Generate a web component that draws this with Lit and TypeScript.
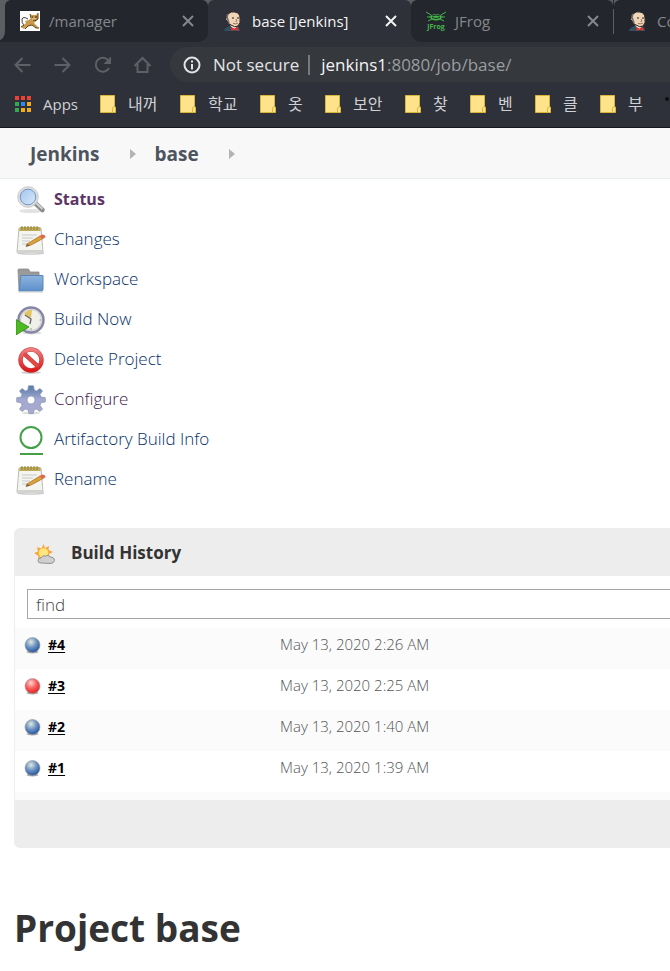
import { LitElement, html, svg, css } from "lit";
import { customElement } from "lit/decorators.js";
import { classMap } from "lit/directives/class-map.js";

const tomcat = svg`<svg class="fav" viewBox="0 0 20 20" aria-hidden="true">
  <rect width="20" height="20" fill="#fff"/>
  <path d="M8 8Q3 5 2 8Q1 12 5 15" fill="none" stroke="#444" stroke-width="1"/>
  <path d="M1 16 4 14 6 12 5 10 9 9 11 7 10 3 12 4 16 4 18 2 18 8 16 10 14 12 17 15 19 17 16 17 12 14 8 15 4 18Z" fill="#c9984a"/>
  <path d="M1 16 4 14M5 18 8 15 12 14 16 17 19 17M10 3 11 7M18 2 18 8 15 10" fill="none" stroke="#5b4520" stroke-width="1"/>
  <path d="M12 6h1M15 6h2M13 9h3" stroke="#222" stroke-width="1"/>
  <path d="M12 7.500h4v1h-4z" fill="#f2e08a"/></svg>`;

const jenkins = svg`<svg class="fav" viewBox="0 0 20 20" aria-hidden="true">
  <path d="M1 20Q2 16 7 15L14 15Q17 16 17 20Z" fill="#335061"/>
  <path d="M7 14 11 19 15 14Z" fill="#f3efe6"/>
  <path d="M5 3Q8 0 12 1Q17 2 17 7Q18 12 15 15Q12 17 8 14Q5 13 4 10Q2 9 3 7Q4 6 4 5Z" fill="#f0d6b7" stroke="#2b2320" stroke-width="1"/>
  <path d="M5 3Q3 6 5 9L6 12" fill="none" stroke="#6d6b6d" stroke-width="1.500"/>
  <path d="M9 7h2M14 7h2" stroke="#222" stroke-width="1.200"/>
  <path d="M13 8 14 10 12.500 10.500M10 12.500Q13 13.500 15 12" fill="none" stroke="#805a45" stroke-width=".8"/>
  <path d="M8 16 11.500 17.500 15 16 15.500 20 11.500 18.500 8.500 20Z" fill="#e0322c"/></svg>`;

const jfrog = svg`<svg class="fav" viewBox="0 0 20 20" aria-hidden="true">
  <g fill="none" stroke="#43b649" stroke-width="1">
  <path d="M0 1 5 4M20 1 15 4M1 6 5 6M19 6 15 6M2 10 6 8M18 10 14 8"/></g>
  <path d="M4 5Q10 1 16 5L15 8Q10 11 5 8Z" fill="#43b649"/>
  <path d="M6 5Q10 3 14 5M6 6.500Q10 8.500 14 6.500" fill="none" stroke="#23262d" stroke-width="1"/>
  <text x="10" y="18" text-anchor="middle" font-size="7" font-weight="700" font-family="Open Sans, sans-serif" fill="#43b649">JFrog</text></svg>`;

const paper = svg`
  <path d="M2 27Q15 31 28 27V29Q15 31 2 29Z" fill="#bbb" opacity=".6"/>
  <path d="M3 3H25L27 27Q27 28 26 28H2Q1 28 1 27Z" fill="#f4f4f1" stroke="#bcbcb8"/>
  <path d="M2 25H27L26.500 27.500H1.500Z" fill="#d2d2cf"/>
  <path d="M4 2H24L25 6H3Z" fill="#bfae57"/>
  <path d="M6 1V5M9 1V5M12 1V5M15 1V5M18 1V5M21 1V5" stroke="#8f7f38"/>
  <path d="M6 10H21M6 13H17M6 16H14M6 19H12" stroke="#c8c8c8"/>
  <path d="M11 19 24 11 27 13.500 15 20 10 21.500Z" fill="#dda13c" stroke="#a87327" stroke-width=".8"/>
  <path d="M23.500 11 26 9.500Q29.500 9.500 29.500 12L27 14Z" fill="#e2664e"/>
  <path d="M10 21.500 11.500 19 14 20.500Z" fill="#6b5f48"/>`;

const taskIcons: Record<string, unknown> = {
  search: svg`<ellipse cx="15" cy="26" rx="12" ry="2" fill="#e2e2e2"/>
    <path d="M19 18 26.500 25" stroke="#8c8c8c" stroke-width="4.500" stroke-linecap="round"/>
    <path d="M20 18 26 23.500" stroke="#d4d4d4" stroke-width="1.800" stroke-linecap="round"/>
    <circle cx="12" cy="12" r="9" fill="url(#lens)" stroke="#dcdedf" stroke-width="2.600"/>
    <circle cx="12" cy="12" r="7.800" fill="none" stroke="#7795c4" stroke-width="1"/>
    <circle cx="12" cy="12" r="10.400" fill="none" stroke="#b5b5b5" stroke-width=".6"/>
    <defs><linearGradient id="lens" x1="0" y1="0" x2="1" y2="1"><stop stop-color="#9fc3ee"/><stop offset="1" stop-color="#dcebfb"/></linearGradient></defs>`,
  paper,
  folder: svg`<path d="M2 5Q2 4 3 4H12Q13 4 13.500 6L14 7H23V25H3Z" fill="#9a9a9a" stroke="#8a8a8a" stroke-width=".8"/>
    <path d="M5 10.500H27V24.500L26 26H3Z" fill="url(#blue)" stroke="#5a86bb"/>
    <path d="M2 27H27" stroke="#ccc"/>
    <defs><linearGradient id="blue" x2="0" y2="1"><stop stop-color="#8db4df"/><stop offset="1" stop-color="#5d8fca"/></linearGradient></defs>`,
  clock: svg`<ellipse cx="16" cy="28" rx="10" ry="1.500" fill="#ddd"/>
    <circle cx="15" cy="15" r="12.500" fill="#f0f0ea" stroke="#8586a5" stroke-width="2.500"/>
    <circle cx="15" cy="15" r="10.500" fill="none" stroke="#c9c9d0"/>
    <path d="M15 13 8 9Q11 5 16 5Z" fill="#e3c45e"/>
    <path d="M9 10 15 14 14 19" fill="none" stroke="#666" stroke-width="1.300"/>
    <path d="M23.500 15H25M15 23V25" stroke="#999"/>
    <path d="M0 14.500 13 22 0 30Z" fill="#4cbb22" stroke="#358a16" stroke-width=".8"/>`,
  stop: svg`<ellipse cx="15" cy="27.500" rx="10" ry="1.500" fill="#ccc"/>
    <circle cx="15" cy="15" r="10.500" fill="#fff" stroke="#c93a3a" stroke-width="4.400"/>
    <path d="M8 8.500 22 21.500" stroke="#c92b2b" stroke-width="4.400"/>
    <circle cx="15" cy="15" r="10.500" fill="none" stroke="url(#red)" stroke-width="3.600"/>
    <path d="M8 8.500 22 21.500" stroke="#e04a48" stroke-width="3.600"/>
    <defs><linearGradient id="red" x2="0" y2="1"><stop stop-color="#ee8080"/><stop offset="1" stop-color="#d91a1a"/></linearGradient></defs>`,
  gear: svg`<ellipse cx="15" cy="28" rx="9" ry="1.500" fill="#ddd"/>
    <path fill-rule="evenodd" fill="url(#gear)" stroke="#8a94b5" stroke-width=".7" d="M12.500 .8H17.500L18.300 5 20.500 6 24 3.500 26.500 6 24 9.500 25 12 29.300 12.700V17L25 17.800 24 20.300 26.500 24 24 26.500 20.500 24 18 25 17.200 28.500H13L12.200 25 9.500 24 6 26.500 3.500 24 6 20.300 5 17.800 .7 17V12.700L5 12 6 9.500 3.500 6 6 3.500 9.500 6 11.800 5ZM15 11A4 4 0 1 0 15 19A4 4 0 1 0 15 11Z"/>
    <defs><linearGradient id="gear" x2="0" y2="1"><stop stop-color="#5579a8"/><stop offset=".5" stop-color="#a3a9cf"/><stop offset="1" stop-color="#a9a9cf"/></linearGradient></defs>`,
  ring: svg`<circle cx="15" cy="12.500" r="10.500" fill="none" stroke="#43a047" stroke-width="2"/>
    <path d="M4 29H27" stroke="#43a047" stroke-width="2"/>`,
};

const tasks = [
  { icon: "search", label: "Status", kind: "current" },
  { icon: "paper", label: "Changes", kind: "" },
  { icon: "folder", label: "Workspace", kind: "" },
  { icon: "clock", label: "Build Now", kind: "" },
  { icon: "stop", label: "Delete Project", kind: "" },
  { icon: "gear", label: "Configure", kind: "visited" },
  { icon: "ring", label: "Artifactory Build Info", kind: "" },
  { icon: "paper", label: "Rename", kind: "" },
];

const builds = [
  { id: "#4", ok: true, date: "May 13, 2020 2:26 AM" },
  { id: "#3", ok: false, date: "May 13, 2020 2:25 AM" },
  { id: "#2", ok: true, date: "May 13, 2020 1:40 AM" },
  { id: "#1", ok: true, date: "May 13, 2020 1:39 AM" },
];

@customElement("browser-chrome")
class BrowserChrome extends LitElement {
  static styles = css`
    :host { display: block; background: #2e3139; color: #d5d7da; border-bottom: 1px solid #15171c; overflow: hidden; }
    button { border: 0; padding: 0; background: none; color: inherit; font: inherit; display: flex; align-items: center; }
    svg { display: block; flex: none; }
    .strip { display: flex; height: 42px; background: linear-gradient(#5c5e62 50%, #2e3139 50%); }
    .edge { flex: none; width: 5px; background: #23262d; }
    .edge-fill { height: 40px; background: #5c5e62; border-bottom-right-radius: 5px 10px; }
    .tab { flex: 0 0 203px; box-sizing: border-box; display: flex; align-items: center; padding: 0 12px 0 15px; background: #23262d; color: #85878b; border-radius: 6px 6px 10px 10px; font-size: 15px; }
    .tab.first { border-bottom-left-radius: 0; }
    .tab.third { flex-basis: 202px; border-bottom-right-radius: 0; }
    .tab.last { border-bottom-left-radius: 0; padding-left: 14px; }
    .tab.active { background: #2e3139; color: #f3f4f5; }
    .split { flex: none; width: 1px; background: linear-gradient(#23262d 9px, #5c5e62 9px, #5c5e62 34px, #23262d 34px); }
    .fav { width: 20px; height: 20px; margin-right: 9px; }
    .name { flex: 1; white-space: nowrap; }
    .toolbar { display: flex; align-items: center; height: 45px; padding-left: 13px; color: #5d6066; }
    .nav { width: 40px; height: 32px; }
    .omni { flex: 1; display: flex; align-items: center; height: 35px; margin-left: -3px; padding-left: 13px; border-radius: 18px 0 0 18px; background: #35383c; color: #e3e4e6; font-size: 17px; white-space: nowrap; }
    .secure { gap: 12px; }
    .bar { width: 2px; height: 20px; margin: 0 11px 0 9px; background: #77797d; }
    .url { color: #9b9da1; }
    .host { color: #f3f4f5; }
    .marks { display: flex; align-items: center; height: 34px; padding: 0 0 6px 15px; gap: 22px; font-size: 15px; color: #cfd1d4; white-space: nowrap; }
    .mark { flex: none; gap: 12px; }
    .apps { gap: 11px; }
    .ko { font-size: 16px; line-height: 24px; min-width: 15px; text-align: left; }
    .ko.two { min-width: 30px; }
    .dot { width: 4px; height: 4px; border-radius: 2px; background: #0d0e10; margin-bottom: 10px; flex: none; }
  `;
  private tab(icon: unknown, name: string, cls: string) {
    return html`<div class=${classMap({ tab: true, [cls]: true })}>${icon}<span class="name">${name}</span>
      <button aria-label="Close tab"><svg width="16" height="16" viewBox="0 0 16 16" fill="none" stroke="currentColor" stroke-width="2"><path d="M3 3 13 13M13 3 3 13"/></svg></button></div>`;
  }
  private nav(label: string, d: unknown) {
    return html`<button class="nav" aria-label=${label}><svg width="20" height="20" viewBox="0 0 20 20" fill="none" stroke="currentColor" stroke-width="2">${d}</svg></button>`;
  }
  render() {
    return html`
      <div class="strip">
        <div class="edge"><div class="edge-fill"></div></div>
        ${this.tab(tomcat, "/manager", "first")}
        ${this.tab(jenkins, "base [Jenkins]", "active")}
        ${this.tab(jfrog, "JFrog", "third")}
        <span class="split"></span>
        ${this.tab(jenkins, "Co", "last")}
      </div>
      <div class="toolbar">
        ${this.nav("Back", svg`<path d="M17.500 10H3M9.500 3 2.500 10 9.500 17"/>`)}
        ${this.nav("Forward", svg`<path d="M1.500 10H16M9.500 3 16.500 10 9.500 17"/>`)}
        ${this.nav("Reload", svg`<path d="M16 13A7 7 0 1 1 15 5"/><path d="M10.500 9H18V1.500Z" fill="currentColor" stroke="none"/>`)}
        ${this.nav("Home", svg`<path d="M1.500 11 9.500 3 17.500 11M4.500 9V17H14.500V9"/>`)}
        <div class="omni">
          <button class="secure"><svg width="18" height="18" viewBox="0 0 18 18"><circle cx="9" cy="9" r="7.500" fill="none" stroke="currentColor" stroke-width="2"/><path d="M9 8V13.500M9 4.500V6.500" stroke="currentColor" stroke-width="2"/></svg>Not secure</button>
          <span class="bar"></span>
          <span class="url" role="textbox" aria-label="Address"><span class="host">jenkins1</span>:8080/job/base/</span>
        </div>
      </div>
      <div class="marks">
        <button class="mark apps"><svg width="17" height="17" viewBox="0 0 17 17">
          <path fill="#ea4335" d="M0 0h4v4H0zM6 0h4v4H6zM12 0h4v4h-4z"/><path fill="#34a853" d="M0 6h4v4H0zM0 12h4v4H0z"/>
          <path fill="#2a8cf0" d="M6 6h4v4H6z"/><path fill="#f4ad14" d="M12 6h4v4h-4zM12 12h4v4h-4zM6 12h4v4H6z"/></svg>Apps</button>
        ${["내꺼", "학교", "옷", "보안", "찾", "벤", "클", "부"].map((t) => html`<button class="mark">
          <svg width="16" height="18" viewBox="0 0 16 18"><path d="M.5.5H14.500V12H15.500V17.500H.5Z" fill="#ffe38a" stroke="#d9b73d"/><path d="M12.500 17V13.500Q12.500 12 14 12" fill="none" stroke="#d9b73d"/></svg>
          <span class=${classMap({ ko: true, two: t.length > 1 })}>${t}</span></button>`)}
        <span class="dot"></span>
      </div>`;
  }
}

@customElement("build-history")
class BuildHistory extends LitElement {
  static styles = css`
    :host { display: block; }
    .head { display: flex; align-items: center; height: 48px; padding-left: 20px; gap: 16px; background: #ededed; border-radius: 6px 0 0 0; }
    .head svg { margin-top: 4px; }
    h2 { margin: 0; font-size: 17px; font-weight: 700; color: #333; }
    .body { border-left: 1px solid #eee; background: #fff; }
    .find { padding: 13px 0 9px 12px; }
    input { display: block; box-sizing: border-box; width: 100%; height: 30px; border: 1px solid #a6a6a6; border-right: 0; padding: 0 8px; font: inherit; font-size: 17px; font-weight: 300; background: #fff; border-radius: 0; }
    input::placeholder { color: #444; opacity: 1; }
    table { width: 100%; border-collapse: collapse; }
    tr { height: 41px; }
    tr:nth-child(odd) { background: #fbfbfb; }
    td { padding: 0; vertical-align: top; line-height: 34px; font-size: 14px; }
    .id { width: 265px; }
    .build { display: flex; align-items: center; gap: 7px; padding-left: 9px; }
    a { color: #000; font-weight: 700; text-decoration: underline; text-underline-offset: 2px; }
    .date { color: #555; font-size: 15px; line-height: 32px; font-weight: 300; }
    .rest { height: 8px; background: #fbfbfb; }
    .foot { height: 48px; background: #ededed; border-radius: 0 0 0 6px; }
  `;
  private ball(ok: boolean, index: number) {
    const id = "ball" + index;
    return html`<svg width="17" height="18" viewBox="0 0 17 18" role="img" aria-label=${ok ? "Success" : "Failed"}>
      <defs><radialGradient id=${id} cx=".4" cy=".3" r=".7"><stop stop-color=${ok ? "#e3eadd" : "#ffd6d6"}/><stop offset=".5" stop-color=${ok ? "#7196c4" : "#fa6262"}/><stop offset="1" stop-color=${ok ? "#2557a0" : "#e52222"}/></radialGradient></defs>
      <ellipse cx="8.500" cy="16" rx="6" ry="1.500" fill="#aaa"/><circle cx="8.500" cy="9" r="7.500" fill="url(#${id})" stroke="#999" stroke-width=".6"/></svg>`;
  }
  render() {
    return html`
      <div class="head">
        <svg width="21" height="21" viewBox="0 0 21 21" aria-hidden="true">
          <path d="M9.500 0 11 4 15 2 14.500 6 19 8 15 10 16 14 4 16 4.500 12 0 9 4 7.500 3 3 7.500 4.500Z" fill="#f4a83c"/>
          <circle cx="9.500" cy="9" r="4.800" fill="#ffe67b"/>
          <path d="M7 19Q4 19 4 16.500Q4 14 7 14Q8 11 11.500 12Q14 10 16 13Q20.500 13 20.500 16.500Q20 19 17 19.500Z" fill="#cfcfcf" stroke="#929292"/></svg>
        <h2>Build History</h2>
      </div>
      <div class="body">
        <div class="find"><input type="text" placeholder="find" aria-label="find" /></div>
        <table><tbody>${builds.map((b, i) => html`<tr>
          <td class="id"><div class="build">${this.ball(b.ok, i)}<a href="#">${b.id}</a></div></td>
          <td class="date">${b.date}</td></tr>`)}</tbody></table>
        <div class="rest"></div>
      </div>
      <div class="foot"></div>`;
  }
}

@customElement("app-root")
class AppRoot extends LitElement {
  static styles = css`
    :host { display: block; min-height: 100vh; background: #fff; overflow: hidden; font-family: "Open Sans", "Noto Sans CJK KR", sans-serif; }
    .crumbs { display: flex; align-items: center; height: 48px; padding: 2px 0 0 30px; background: #f8f8f8; border-bottom: 1px solid #e5efed; font-size: 19px; font-weight: 700; }
    .crumbs a { color: #4d545d; text-decoration: none; }
    .arrow { width: 0; height: 0; margin: 0 19px 0 30px; border-left: 6px solid #b4b4b4; border-top: 5px solid transparent; border-bottom: 5px solid transparent; }
    .tasks { padding: 1px 0 0 16px; }
    .task { display: flex; align-items: center; width: fit-content; height: 40px; gap: 8px; color: #063069; font-size: 17px; font-weight: 300; text-decoration: none; }
    .task svg { display: block; width: 30px; height: 30px; }
    .task span { padding-bottom: 3px; }
    .visited { color: #451a50; }
    .current { color: #5c3566; font-size: 16px; font-weight: 700; }
    .history { margin: 28px 0 0 14px; }
    h1 { margin: 52px 0 0 14px; font-size: 37px; line-height: 56px; font-weight: 700; color: #333; }
  `;
  render() {
    return html`
      <browser-chrome></browser-chrome>
      <nav class="crumbs"><a href="#">Jenkins</a><span class="arrow"></span><a href="#">base</a><span class="arrow"></span></nav>
      <nav class="tasks">${tasks.map((t) => html`<a href="#" class=${classMap({ task: true, current: t.kind === "current", visited: t.kind === "visited" })}>
        <svg viewBox="0 0 30 30" aria-hidden="true">${taskIcons[t.icon]}</svg><span>${t.label}</span></a>`)}</nav>
      <build-history class="history"></build-history>
      <h1>Project base</h1>`;
  }
}
